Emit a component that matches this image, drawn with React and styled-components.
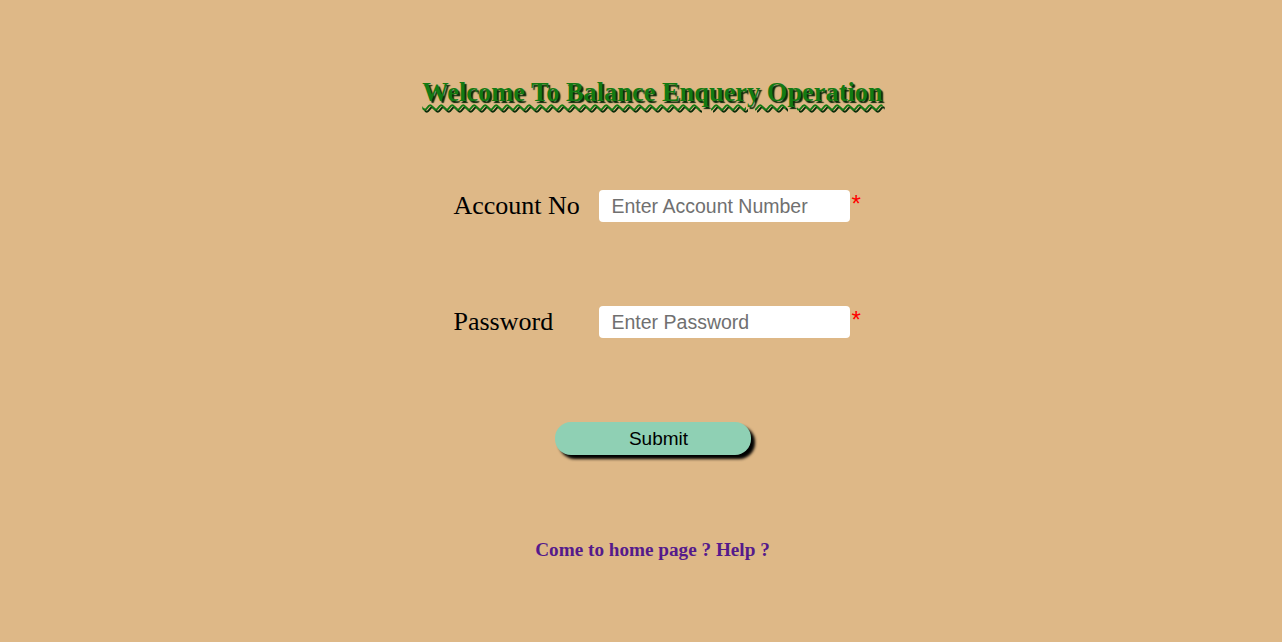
import React from 'react'
import styled, { createGlobalStyle } from 'styled-components'

const GlobalStyle = createGlobalStyle`
  body {
    margin: 0;
    background: #deb887;
    font-family: "Liberation Serif", "Times New Roman", serif;
  }
`;

const Page = styled.div`
  min-height: 642px;
  display: flex;
  flex-direction: column;
  align-items: center;
  padding: 74px 0 0 23px;
  box-sizing: border-box;
`;

const Title = styled.h2`
  margin: 0;
  font-size: 26.4px;
  font-weight: bold;
  color: #137a13;
  text-shadow: 2px 2px 1px #0a2a0a;
  text-decoration: underline wavy #137a13;
  text-decoration-thickness: 2px;
  text-underline-offset: 3px;
  line-height: 36px;
`;

const Form = styled.form`
  display: flex;
  flex-direction: column;
  align-items: center;
  margin-top: 80px;
  margin-left: 12px;
`;

const Row = styled.div`
  display: grid;
  grid-template-columns: 145px 251px 14px;
  align-items: center;
  margin-bottom: ${p => p.$gap || 0}px;
`;

const Label = styled.label`
  font-size: 26px;
  color: #000;
`;

const Input = styled.input`
  width: 251px;
  height: 32px;
  box-sizing: border-box;
  border: none;
  border-radius: 4px;
  background: #fff;
  padding: 0 13px;
  font-family: "Liberation Sans", Arial, sans-serif;
  font-size: 19.5px;
  outline: none;
  &::placeholder {
    color: #707070;
  }
`;

const Star = styled.span`
  color: #f00;
  font-family: "Liberation Sans", Arial, sans-serif;
  font-size: 24px;
  align-self: start;
  padding: 2px 0 0 2px;
  line-height: 24px;
`;

const SubmitButton = styled.button`
  width: 196px;
  height: 33px;
  border: none;
  border-radius: 16px;
  background: #8fd0b4;
  box-shadow: 4px 4px 3px #000;
  font-family: "Liberation Sans", Arial, sans-serif;
  font-size: 19px;
  color: #000;
  padding: 0 0 0 12px;
  cursor: pointer;
  margin: 0 0 0 -12px;
`;

const Links = styled.p`
  margin: 84px 0 0 0;
  font-size: 19.2px;
  font-weight: bold;
  color: #551a8b;
`;

const Link = styled.a`
  color: inherit;
  text-decoration: none;
`;

export default function App() {
  return (
    <Page>
      <GlobalStyle />
      <Title>Welcome To Balance Enquery Operation</Title>
      <Form onSubmit={e => e.preventDefault()}>
        <Row $gap={84}>
          <Label>Account No</Label>
          <Input type="text" placeholder="Enter Account Number" />
          <Star>*</Star>
        </Row>
        <Row $gap={84}>
          <Label>Password</Label>
          <Input type="password" placeholder="Enter Password" />
          <Star>*</Star>
        </Row>
        <SubmitButton type="submit">Submit</SubmitButton>
      </Form>
      <Links>
        <Link href="#">Come to home page ?</Link> <Link href="#">Help ?</Link>
      </Links>
    </Page>
  )
}
